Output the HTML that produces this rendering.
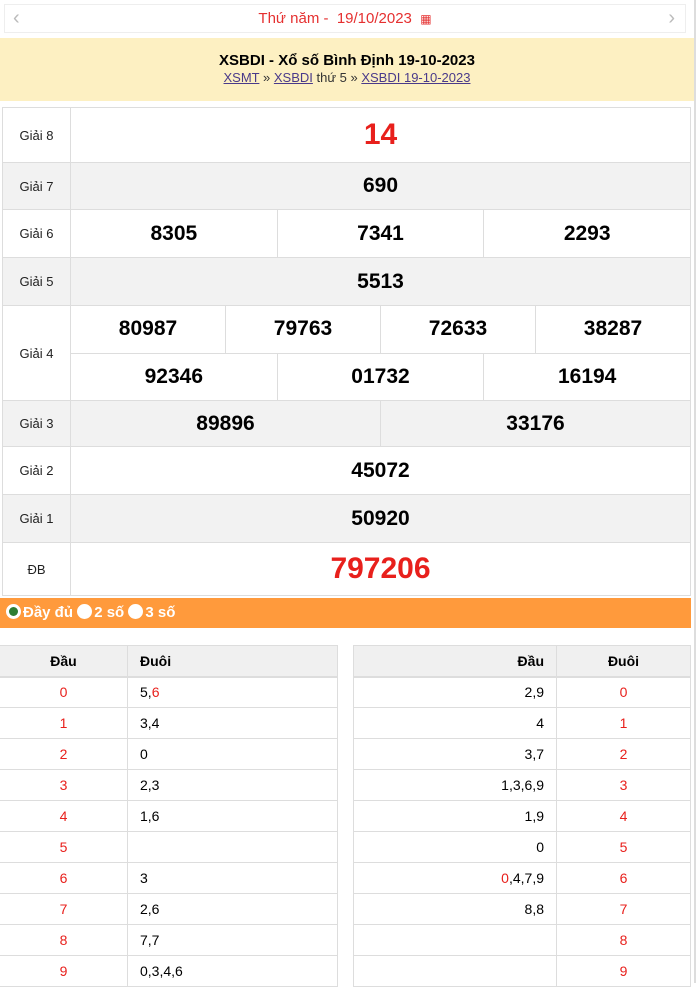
<!DOCTYPE html>
<html><head><meta charset="utf-8">
<style>
*{margin:0;padding:0;box-sizing:border-box}
body{width:700px;height:983px;background:#fff;font-family:"Liberation Sans",Arial,sans-serif;position:relative;overflow:hidden;color:#000}
.sb{position:absolute;right:0;top:0;width:6px;height:983px;background:#fff;border-left:2px solid #ddd}
.nav{position:absolute;left:4px;top:4px;width:682px;height:29px;border:1px solid #eee;text-align:center;color:#e53030;font-size:15px;line-height:27px}
.nav .l,.nav .r{position:absolute;top:0;color:#bbb;font-size:20px}
.nav .l{left:8px}.nav .r{right:10px}
.yel{position:absolute;left:0;top:38px;width:694px;height:63px;background:#fdf0c2;text-align:center}
.yel h1{font-size:15px;font-weight:bold;margin-top:14px;line-height:18px}
.yel p{font-size:13px;line-height:15px;color:#333}
.yel a{color:#4a3a8a;text-decoration:underline}
.row{position:absolute;left:2px;width:689px;display:flex;border-left:1px solid #ddd;border-right:1px solid #ddd;border-bottom:1px solid #ddd}
.row.g{background:#f2f2f2}
.lab{width:68px;border-right:1px solid #ddd;font-size:13px;display:flex;align-items:center;justify-content:center;color:#222}
.nums{flex:1;display:flex;flex-direction:column}
.ln{flex:1;display:flex}
.ln+.ln{border-top:1px solid #ddd}
.c{flex:1;display:flex;align-items:center;justify-content:center;font-weight:bold;font-size:21px}
.c+.c{border-left:1px solid #ddd}
.red{color:#e8201c}
.or{position:absolute;left:0;top:598px;width:691px;height:30px;background:#ff9a3c;color:#fff;font-weight:bold;font-size:15px;line-height:30px;padding-left:6px}
.dot{display:inline-block;width:15px;height:15px;border-radius:50%;background:#fff;vertical-align:-2px;margin-right:2px;position:relative}
.dot.on::after{content:"";position:absolute;left:3px;top:3px;width:9px;height:9px;border-radius:50%;background:#2e7d32}
table{position:absolute;top:645px;border-collapse:collapse;font-size:14px}
td,th{border:1px solid #ddd;height:31px;padding:0 12px}
th{background:#f0f0f0;font-weight:bold;font-size:14px;border-bottom:2px solid #ddd}
.t1{left:-1px;width:339px}.t2{left:353px;width:338px}
.r{color:#e8201c}
.ctr{text-align:center}.rt{text-align:right}.lf{text-align:left}
</style></head><body>
<div class="sb"></div>
<div class="nav"><span class="l">‹</span>Thứ năm -&nbsp; 19/10/2023 &nbsp;<span style="font-size:12px">▦</span><span class="r">›</span></div>
<div class="yel"><h1>XSBDI - Xổ số Bình Định 19-10-2023</h1><p><a>XSMT</a> » <a>XSBDI</a> thứ 5 » <a>XSBDI 19-10-2023</a></p></div>

<div class="row" style="top:107px;height:56px;border-top:1px solid #ddd"><div class="lab">Giải 8</div><div class="nums"><div class="ln"><div class="c red" style="font-size:30px">14</div></div></div></div>
<div class="row g" style="top:163px;height:47px"><div class="lab">Giải 7</div><div class="nums"><div class="ln"><div class="c">690</div></div></div></div>
<div class="row" style="top:210px;height:48px"><div class="lab">Giải 6</div><div class="nums"><div class="ln"><div class="c">8305</div><div class="c">7341</div><div class="c">2293</div></div></div></div>
<div class="row g" style="top:258px;height:48px"><div class="lab">Giải 5</div><div class="nums"><div class="ln"><div class="c">5513</div></div></div></div>
<div class="row" style="top:306px;height:95px"><div class="lab">Giải 4</div><div class="nums"><div class="ln"><div class="c">80987</div><div class="c">79763</div><div class="c">72633</div><div class="c">38287</div></div><div class="ln"><div class="c">92346</div><div class="c">01732</div><div class="c">16194</div></div></div></div>
<div class="row g" style="top:401px;height:46px"><div class="lab">Giải 3</div><div class="nums"><div class="ln"><div class="c">89896</div><div class="c">33176</div></div></div></div>
<div class="row" style="top:447px;height:48px"><div class="lab">Giải 2</div><div class="nums"><div class="ln"><div class="c">45072</div></div></div></div>
<div class="row g" style="top:495px;height:48px"><div class="lab">Giải 1</div><div class="nums"><div class="ln"><div class="c">50920</div></div></div></div>
<div class="row" style="top:543px;height:53px"><div class="lab">ĐB</div><div class="nums"><div class="ln"><div class="c red" style="font-size:30px">797206</div></div></div></div>

<div class="or"><span class="dot on"></span>Đầy đủ <span class="dot"></span>2 số <span class="dot"></span>3 số</div>

<table class="t1">
<tr><th class="ctr" style="width:128px">Đầu</th><th class="lf">Đuôi</th></tr>
<tr><td class="ctr r">0</td><td>5,<span class="r">6</span></td></tr>
<tr><td class="ctr r">1</td><td>3,4</td></tr>
<tr><td class="ctr r">2</td><td>0</td></tr>
<tr><td class="ctr r">3</td><td>2,3</td></tr>
<tr><td class="ctr r">4</td><td>1,6</td></tr>
<tr><td class="ctr r">5</td><td></td></tr>
<tr><td class="ctr r">6</td><td>3</td></tr>
<tr><td class="ctr r">7</td><td>2,6</td></tr>
<tr><td class="ctr r">8</td><td>7,7</td></tr>
<tr><td class="ctr r">9</td><td>0,3,4,6</td></tr>
</table>
<table class="t2">
<tr><th class="rt">Đầu</th><th class="ctr" style="width:134px">Đuôi</th></tr>
<tr><td class="rt">2,9</td><td class="ctr r">0</td></tr>
<tr><td class="rt">4</td><td class="ctr r">1</td></tr>
<tr><td class="rt">3,7</td><td class="ctr r">2</td></tr>
<tr><td class="rt">1,3,6,9</td><td class="ctr r">3</td></tr>
<tr><td class="rt">1,9</td><td class="ctr r">4</td></tr>
<tr><td class="rt">0</td><td class="ctr r">5</td></tr>
<tr><td class="rt"><span class="r">0</span>,4,7,9</td><td class="ctr r">6</td></tr>
<tr><td class="rt">8,8</td><td class="ctr r">7</td></tr>
<tr><td class="rt"></td><td class="ctr r">8</td></tr>
<tr><td class="rt"></td><td class="ctr r">9</td></tr>
</table>
</body></html>
